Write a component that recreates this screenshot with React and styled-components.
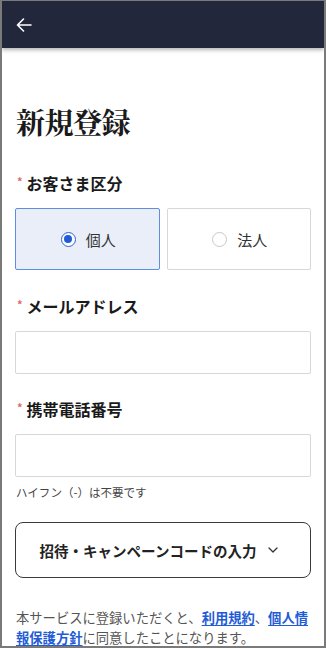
import React, { useState } from "react";
import styled, { createGlobalStyle } from "styled-components";

const Global = createGlobalStyle`
  html, body { margin: 0; padding: 0; background: #fff; }
  body { font-family: "Noto Sans CJK JP", "Noto Sans", sans-serif; color: #1a1a1a; }
  * { box-sizing: border-box; }
`;

const Frame = styled.div`
  width: 326px;
  height: 648px;
  border-top: 1px solid #7a7a7a;
  border-left: 2px solid #7a7a7a;
  border-right: 2px solid #7a7a7a;
  border-bottom: 2px solid #7a7a7a;
  overflow: hidden;
  display: flex;
  flex-direction: column;
`;

const Header = styled.header`
  height: 47px;
  flex: none;
  background: #23273b;
  display: flex;
  align-items: center;
  padding-left: 13px;
  box-shadow: 0 2px 4px rgba(0, 0, 0, 0.3);
  position: relative;
  z-index: 1;
`;

const BackButton = styled.button`
  background: none;
  border: none;
  padding: 0;
  width: 18px;
  height: 18px;
  display: flex;
  align-items: center;
  justify-content: center;
  cursor: pointer;
`;

const Main = styled.main`
  padding: 0 13px;
  display: flex;
  flex-direction: column;
`;

const Title = styled.h1`
  margin: 54px 0 0 1px;
  font-family: "Noto Serif CJK JP", "Noto Sans CJK JP", serif;
  font-size: 29px;
  line-height: 40px;
  font-weight: 700;
  letter-spacing: -0.5px;
`;

const Field = styled.div`
  margin-top: ${(p) => p.$mt}px;
  display: flex;
  flex-direction: column;
`;

const Label = styled.label`
  display: flex;
  align-items: center;
  font-size: 16px;
  line-height: 24px;
  font-weight: 700;
  margin-bottom: 13px;
  padding-left: 2px;
`;

const Required = styled.span`
  color: #e06a6a;
  font-size: 11px;
  font-weight: 700;
  margin-right: 4px;
  margin-top: -4px;
`;

const RadioRow = styled.div`
  display: grid;
  grid-template-columns: 1fr 1fr;
  gap: 7px;
`;

const RadioCard = styled.button`
  height: 62px;
  border: 1px solid ${(p) => (p.$active ? "#5d8ee0" : "#d8d8d8")};
  background: ${(p) => (p.$active ? "#e9eef9" : "#fff")};
  border-radius: 2px;
  display: flex;
  align-items: center;
  justify-content: center;
  gap: 10px;
  font-family: inherit;
  font-size: 15px;
  color: #333;
  cursor: pointer;
  padding: 0 0 0 2px;
`;

const Dot = styled.span`
  width: 15px;
  height: 15px;
  border-radius: 50%;
  border: ${(p) => (p.$active ? "1.5px solid #2a63d6" : "1px solid #c8c8c8")};
  display: flex;
  align-items: center;
  justify-content: center;
  background: #fff;
  &::after {
    content: "";
    width: 8px;
    height: 8px;
    border-radius: 50%;
    background: ${(p) => (p.$active ? "#1f5cd6" : "transparent")};
  }
`;

const Input = styled.input`
  height: 43px;
  width: 100%;
  border: 1px solid #d8d8d8;
  border-radius: 2px;
  font-family: inherit;
  font-size: 15px;
  padding: 0 10px;
  outline: none;
`;

const Helper = styled.p`
  margin: 7px 0 0 1px;
  font-size: 11.5px;
  line-height: 16px;
  color: #444;
`;

const CodeButton = styled.button`
  margin-top: 22px;
  height: 56px;
  border: 1px solid #3a3a3a;
  border-radius: 8px;
  background: #fff;
  display: flex;
  align-items: center;
  justify-content: center;
  gap: 12px;
  font-family: inherit;
  font-size: 14.5px;
  font-weight: 700;
  color: #222;
  cursor: pointer;
  padding: 0 8px 0 0;
`;

const Notice = styled.p`
  margin: 30px 0 0 1px;
  font-size: 13.3px;
  line-height: 19.5px;
  color: #555;
`;

const Link = styled.a`
  color: #1f5cd6;
  font-weight: 700;
  text-decoration: underline;
  text-underline-offset: 2px;
`;

export default function App() {
  const [type, setType] = useState("personal");
  return (
    <>
      <Global />
      <Frame>
        <Header>
          <BackButton aria-label="戻る">
            <svg width="16" height="14" viewBox="0 0 16 14" fill="none">
              <path d="M15 7H1.5M7.5 1L1.5 7l6 6" stroke="#fff" strokeWidth="1.6" strokeLinecap="round" strokeLinejoin="round" />
            </svg>
          </BackButton>
        </Header>
        <Main>
          <Title>新規登録</Title>
          <Field $mt={29}>
            <Label><Required>*</Required>お客さま区分</Label>
            <RadioRow>
              <RadioCard $active={type === "personal"} onClick={() => setType("personal")}>
                <Dot $active={type === "personal"} />個人
              </RadioCard>
              <RadioCard $active={type === "corp"} onClick={() => setType("corp")}>
                <Dot $active={type === "corp"} />法人
              </RadioCard>
            </RadioRow>
          </Field>
          <Field $mt={24}>
            <Label><Required>*</Required>メールアドレス</Label>
            <Input type="email" />
          </Field>
          <Field $mt={23}>
            <Label><Required>*</Required>携帯電話番号</Label>
            <Input type="tel" />
            <Helper>ハイフン（-）は不要です</Helper>
          </Field>
          <CodeButton>
            招待・キャンペーンコードの入力
            <svg width="10" height="6" viewBox="0 0 10 6" fill="none">
              <path d="M1 1l4 4 4-4" stroke="#333" strokeWidth="1.3" strokeLinecap="round" strokeLinejoin="round" />
            </svg>
          </CodeButton>
          <Notice>
            本サービスに登録いただくと、<Link href="#">利用規約</Link>、<Link href="#">個人情報保護方針</Link>に同意したことになります。
          </Notice>
        </Main>
      </Frame>
    </>
  );
}
